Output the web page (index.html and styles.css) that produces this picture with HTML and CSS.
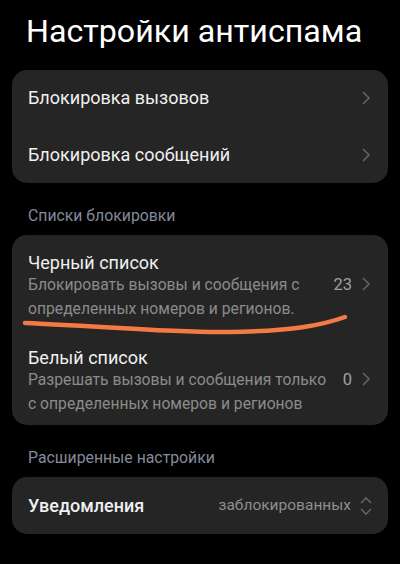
FILE: index.html
```html
<!DOCTYPE html>
<html lang="ru">
<head>
  <meta charset="UTF-8">
  <meta name="viewport" content="width=device-width, initial-scale=1.0">
  <title>Настройки антиспама</title>
  <link rel="stylesheet" href="styles.css">
</head>
<body>
  <header class="page-header">
    <h1>Настройки антиспама</h1>
  </header>

  <main class="page">
    <section class="card">
      <div class="row">
        <span class="row-title">Блокировка вызовов</span>
        <svg class="chevron" viewBox="0 0 8 14"><path d="M1 1l6 6-6 6"/></svg>
      </div>
      <div class="row">
        <span class="row-title">Блокировка сообщений</span>
        <svg class="chevron" viewBox="0 0 8 14"><path d="M1 1l6 6-6 6"/></svg>
      </div>
    </section>

    <h2 class="section-label">Списки блокировки</h2>
    <section class="card">
      <div class="row row-tall">
        <div class="row-text">
          <div class="row-title">Черный список</div>
          <div class="row-sub">Блокировать вызовы и сообщения с определенных номеров и регионов.</div>
        </div>
        <span class="row-value">23</span>
        <svg class="chevron" viewBox="0 0 8 14"><path d="M1 1l6 6-6 6"/></svg>
      </div>
      <div class="row row-tall">
        <div class="row-text">
          <div class="row-title">Белый список</div>
          <div class="row-sub">Разрешать вызовы и сообщения только с определенных номеров и регионов</div>
        </div>
        <span class="row-value">0</span>
        <svg class="chevron" viewBox="0 0 8 14"><path d="M1 1l6 6-6 6"/></svg>
      </div>
    </section>

    <h2 class="section-label">Расширенные настройки</h2>
    <section class="card">
      <div class="row">
        <span class="row-title row-strong">Уведомления</span>
        <span class="row-value">заблокированных</span>
        <svg class="updown" viewBox="0 0 12 20"><path d="M1 7l5-5 5 5M1 13l5 5 5-5"/></svg>
      </div>
    </section>
  </main>

  <!-- пометка маркером поверх скриншота -->
  <svg class="scribble" viewBox="0 0 400 564">
    <path d="M25 323 C 100 326, 170 333, 230 332 C 290 331, 320 326, 345 317"/>
  </svg>
</body>
</html>
```

FILE: styles.css
```css
body {
  font-family: Roboto, "Noto Sans", sans-serif;
  color: #f2f2f2;
  background-color: #000;
  margin: 0;
  padding: 0;
  width: 400px;
  height: 564px;
  overflow: hidden;
  position: relative;
}
.page-header {
  padding: 11px 0 0 26px;
  height: 59px;
}
.page-header h1 {
  margin: 0;
  font-size: 32.2px;
  font-weight: 400;
  line-height: 40px;
  white-space: nowrap;
  color: #fff;
}
.page {
  padding: 0 12px;
}
.card {
  background: #252525;
  border-radius: 15px;
}
.row {
  display: flex;
  align-items: center;
  height: 56px;
  padding: 0 16px;
  gap: 10px;
}
.row:last-child {
  height: 57px;
}
.row-tall,
.row-tall:last-child {
  height: auto;
  padding: 18px 16px 9px;
}
.row-text {
  flex: 1;
}
.row-title {
  flex: 1;
  font-size: 18px;
  line-height: 20px;
  color: #f0f0f0;
}
.row-strong {
  font-weight: 500;
}
.row-sub {
  font-size: 15.7px;
  line-height: 24px;
  color: #8b8b8b;
}
.row-value {
  font-size: 15.5px;
  color: #8e8e8e;
  margin-bottom: 1px;
}
.row-tall .row-value {
  margin-bottom: 6px;
  font-size: 16.5px;
  color: #a0a0a0;
}
.chevron {
  width: 8px;
  height: 14px;
  flex: none;
  fill: none;
  stroke: #6a6a6a;
  stroke-width: 1.4;
  margin-right: 2px;
}
.row-tall .chevron {
  margin-bottom: 6px;
}
.updown {
  width: 12px;
  height: 20px;
  flex: none;
  fill: none;
  stroke: #6a6a6a;
  stroke-width: 1.4;
  margin-left: -1px;
}
.section-label {
  margin: 0;
  padding: 23px 16px 9px;
  font-size: 15.8px;
  font-weight: 400;
  line-height: 20px;
  color: #858a99;
}
.scribble {
  position: absolute;
  left: 0;
  top: 0;
  width: 400px;
  height: 564px;
  fill: none;
  stroke: #f47a45;
  stroke-width: 4.5;
  stroke-linecap: round;
  pointer-events: none;
}
```
